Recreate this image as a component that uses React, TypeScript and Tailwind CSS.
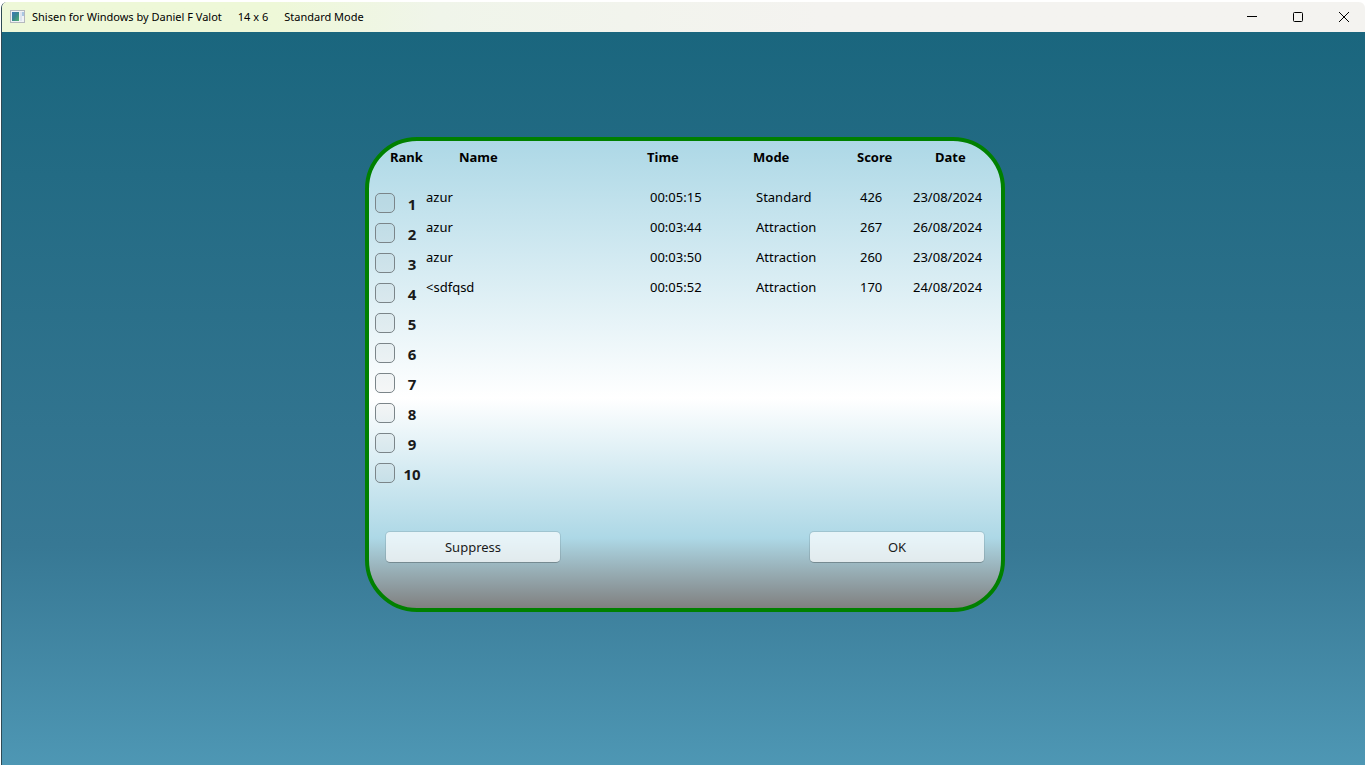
import { useState } from "react";

interface ScoreInterface {
  name: string;
  time: string;
  mode: string;
  score: number;
  date: string;
}

const scores: ScoreInterface[] = [
  { name: "azur", time: "00:05:15", mode: "Standard", score: 426, date: "23/08/2024" },
  { name: "azur", time: "00:03:44", mode: "Attraction", score: 267, date: "26/08/2024" },
  { name: "azur", time: "00:03:50", mode: "Attraction", score: 260, date: "23/08/2024" },
  { name: "<sdfqsd", time: "00:05:52", mode: "Attraction", score: 170, date: "24/08/2024" },
];

const ranks = [1, 2, 3, 4, 5, 6, 7, 8, 9, 10];

function AppIcon() {
  return (
    <svg width="16" height="14" viewBox="0 0 16 14" aria-hidden="true">
      <defs>
        <linearGradient id="pane" x1="0" y1="0" x2="1" y2="1">
          <stop offset="0" stopColor="#3f78b8" />
          <stop offset="0.5" stopColor="#3a8790" />
          <stop offset="1" stopColor="#56b36c" />
        </linearGradient>
      </defs>
      <rect x="0.5" y="0.5" width="14" height="12" fill="#f0f3f6" stroke="#b4b8bd" />
      <rect x="2" y="2" width="7" height="9" fill="url(#pane)" />
      <rect x="10" y="2" width="2" height="9" fill="#dde4ee" />
      <rect x="12" y="2" width="2" height="4" fill="#a9c6e2" />
    </svg>
  );
}

function TitleBar() {
  return (
    <header className="flex h-[30px] items-center bg-linear-to-r from-[#eef8d8] from-20% via-[#f0f5ea] via-32% to-[#f4f3f0] to-60% pl-2 text-[11px] text-black">
      <AppIcon />
      <h1 className="ml-[6px] flex gap-4">
        <span>Shisen for Windows by Daniel F Valot</span>
        <span>14 x 6</span>
        <span>Standard Mode</span>
      </h1>
      <div className="-mr-0.5 ml-auto flex h-full">
        <button type="button" aria-label="Minimize" className="flex w-[46px] items-center justify-center">
          <svg width="10" height="10" viewBox="0 0 10 10" fill="none" stroke="#000">
            <path d="M0 4.5h10" />
          </svg>
        </button>
        <button type="button" aria-label="Maximize" className="flex w-[46px] items-center justify-center">
          <svg width="10" height="10" viewBox="0 0 10 10" fill="none" stroke="#000">
            <rect x="0.5" y="0.5" width="9" height="9" rx="1" />
          </svg>
        </button>
        <button type="button" aria-label="Close" className="flex w-[46px] items-center justify-center">
          <svg width="10" height="10" viewBox="0 0 10 10" fill="none" stroke="#000">
            <path d="M0 0l10 10M10 0L0 10" />
          </svg>
        </button>
      </div>
    </header>
  );
}

export default function App() {
  const [selected, setSelected] = useState<number[]>([]);

  const toggle = (rank: number) =>
    setSelected((prev) =>
      prev.includes(rank) ? prev.filter((r) => r !== rank) : [...prev, rank]
    );

  return (
    <div className="flex min-h-screen flex-col bg-white pt-[2px] pr-px pb-[3px] pl-px font-['Noto_Sans',sans-serif]">
      <div className="flex grow flex-col overflow-hidden rounded-t-md border-l border-[#2f4a55]">
        <TitleBar />
        <main className="grow bg-linear-to-b from-[#1a667e] via-[#377894] via-70% to-[#4e97b4] pt-[105px] pb-10 pl-[3px]">
          <section
            aria-label="High scores"
            className="mx-auto w-full max-w-[640px] overflow-hidden rounded-[52px] border-4 border-[#008000] bg-[linear-gradient(to_bottom,#add8e6_0%,#ffffff_55%,#add8e6_85%,#808080_100%)] pb-[45px]"
          >
            <table className="w-full table-fixed text-left text-[13px] text-black">
              <colgroup>
                <col className="w-[57px]" />
                <col />
                <col className="w-[106px]" />
                <col className="w-[104px]" />
                <col className="w-[56px]" />
                <col className="w-[88px]" />
              </colgroup>
              <thead>
                <tr className="h-[47px] align-top leading-5 font-bold">
                  <th className="pt-[6px] pl-[21px]">Rank</th>
                  <th className="pt-[6px] pl-[33px]">Name</th>
                  <th className="pt-[6px]">Time</th>
                  <th className="pt-[6px]">Mode</th>
                  <th className="pt-[6px]">Score</th>
                  <th className="pt-[6px] pl-[22px]">Date</th>
                </tr>
              </thead>
              <tbody>
                {ranks.map((rank) => {
                  const row = scores[rank - 1];
                  return (
                    <tr key={rank} className="h-[30px] align-top leading-[18px]">
                      <td>
                        <label className="flex h-[30px] items-center pl-[6px] text-[15px] font-bold text-[#1a1a1a]">
                          <input
                            type="checkbox"
                            checked={selected.includes(rank)}
                            onChange={() => toggle(rank)}
                            className="size-5 shrink-0 appearance-none rounded-[5px] border border-[#7b8589] bg-black/3 checked:bg-[#005fb8]"
                          />
                          <span className="w-[34px] shrink-0 pt-0.5 text-center">{rank}</span>
                        </label>
                      </td>
                      <td>{row?.name}</td>
                      <td className="pl-[3px]">{row?.time}</td>
                      <td className="pl-[3px]">{row?.mode}</td>
                      <td className="pl-[3px]">{row?.score}</td>
                      <td>{row?.date}</td>
                    </tr>
                  );
                })}
              </tbody>
            </table>
            <div className="mt-[43px] flex justify-between px-4 text-[13px] text-[#1a1a1a]">
              <button
                type="button"
                onClick={() => setSelected([])}
                className="h-8 w-[176px] rounded-[5px] border border-black/10 border-b-black/25 bg-white/70 bg-clip-padding pt-0.5"
              >
                Suppress
              </button>
              <button
                type="button"
                className="h-8 w-[176px] rounded-[5px] border border-black/10 border-b-black/25 bg-white/70 bg-clip-padding pt-0.5"
              >
                OK
              </button>
            </div>
          </section>
        </main>
      </div>
    </div>
  );
}
